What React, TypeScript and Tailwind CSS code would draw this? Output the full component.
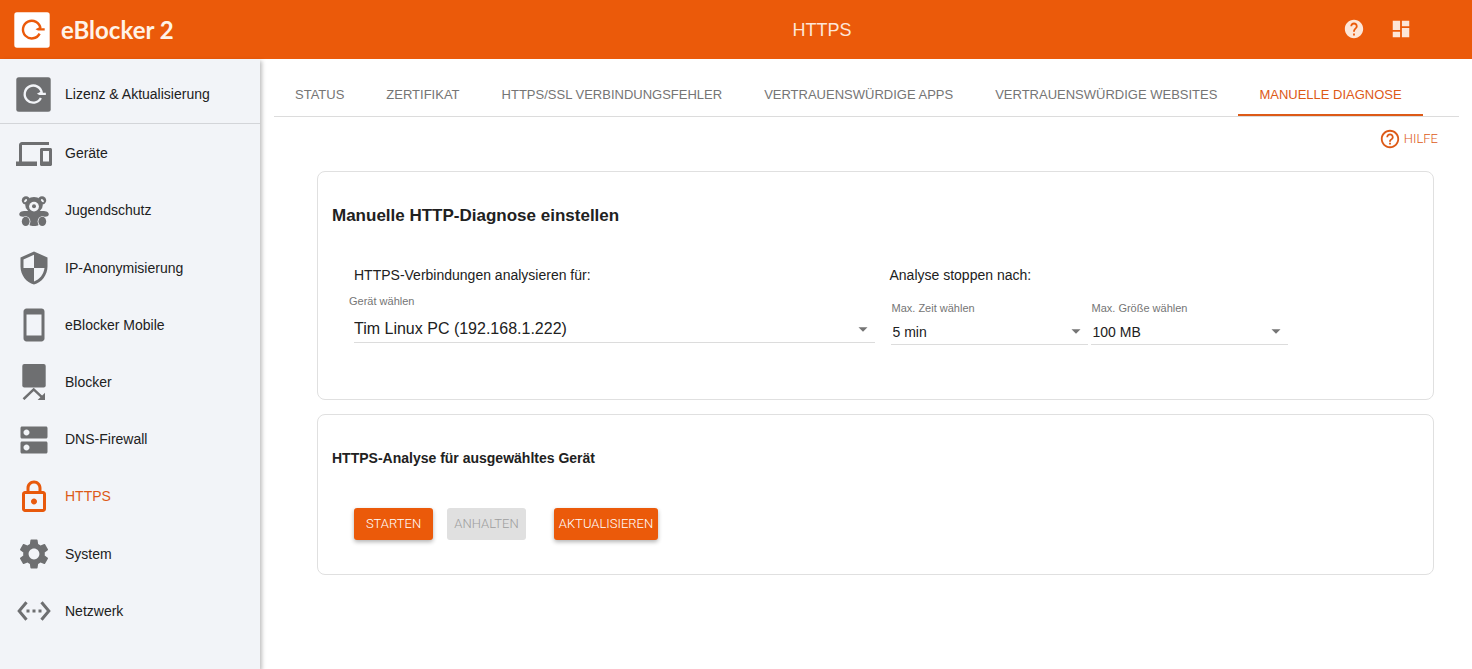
import { useState, type ReactNode } from "react";
import {
  MdDashboard,
  MdDevices,
  MdDns,
  MdHelp,
  MdHelpOutline,
  MdOutlineLock,
  MdSecurity,
  MdSettings,
  MdSettingsEthernet,
  MdStayCurrentPortrait,
} from "react-icons/md";

function LogoMark({ className, ring }: { className: string; ring: string }) {
  return (
    <svg viewBox="0 0 36 36" className={className} aria-hidden="true">
      <rect x="0.3" y="0.3" width="35.4" height="35.4" rx="2.6" fill="currentColor" />
      <path
        d="M26.500 16.600A8.800 8.800 0 1 0 25.600 21.600"
        fill="none"
        stroke={ring}
        strokeWidth="2.400"
      />
      <path d="M21.500 17.200L25.200 15.200L27.200 16.200H30.700V18.600H24z" fill={ring} />
    </svg>
  );
}

function TeddyIcon() {
  return (
    <svg viewBox="0 0 30 30" className="size-[30px]" aria-hidden="true" fill="currentColor">
      <circle cx="7" cy="4.400" r="4.200" />
      <circle cx="23" cy="4.400" r="4.200" />
      <ellipse cx="15" cy="9" rx="8.800" ry="7.900" />
      <path d="M2.500 15.400C6 14.600 9 15 11 15h8c2 0 5-.4 8.500.4 3 1.200 3 4.600 0 5-2 .3-4 .2-5.500.4L19.600 29c-1.500 1.300-7.700 1.300-9.200 0L8 20.800c-1.500-.2-3.500-.1-5.500-.4-3-.4-3-3.800 0-5z" />
      <g fill="#f2f4f8">
        <ellipse cx="6.600" cy="4.600" rx="1.100" ry="1.900" transform="rotate(40 6.600 4.600)" />
        <ellipse cx="23.400" cy="4.600" rx="1.100" ry="1.900" transform="rotate(-40 23.400 4.600)" />
        <circle cx="15" cy="10.600" r="4.900" />
        <ellipse cx="6.700" cy="25.600" rx="4.700" ry="5.300" />
        <ellipse cx="23.300" cy="25.600" rx="4.700" ry="5.300" />
      </g>
      <circle cx="15" cy="10.300" r="2" />
      <ellipse cx="6.700" cy="25.400" rx="3.900" ry="4.600" />
      <ellipse cx="23.300" cy="25.400" rx="3.900" ry="4.600" />
    </svg>
  );
}

function BlockerIcon() {
  return (
    <svg viewBox="0 0 24 36" className="h-9 w-6" aria-hidden="true" fill="currentColor">
      <rect x="0.3" y="0" width="23.400" height="23.400" rx="2" />
      <path d="M1.500 35.200L11.700 25.400l8.500 8" fill="none" stroke="currentColor" strokeWidth="2.500" />
      <path d="M23 28.800v7.200h-7.400z" />
    </svg>
  );
}

type NavItem = { label: string; icon: ReactNode };

const navItems: NavItem[] = [
  { label: "Geräte", icon: <MdDevices className="size-9" /> },
  { label: "Jugendschutz", icon: <TeddyIcon /> },
  { label: "IP-Anonymisierung", icon: <MdSecurity className="size-9" /> },
  { label: "eBlocker Mobile", icon: <MdStayCurrentPortrait className="size-9" /> },
  { label: "Blocker", icon: <BlockerIcon /> },
  { label: "DNS-Firewall", icon: <MdDns className="size-9" /> },
  { label: "HTTPS", icon: <MdOutlineLock className="size-9" /> },
  { label: "System", icon: <MdSettings className="size-9" /> },
  { label: "Netzwerk", icon: <MdSettingsEthernet className="size-9" /> },
];

const tabs = [
  "STATUS",
  "ZERTIFIKAT",
  "HTTPS/SSL VERBINDUNGSFEHLER",
  "VERTRAUENSWÜRDIGE APPS",
  "VERTRAUENSWÜRDIGE WEBSITES",
  "MANUELLE DIAGNOSE",
];

function SelectField({
  id,
  label,
  options,
  large = false,
}: {
  id: string;
  label: string;
  options: string[];
  large?: boolean;
}) {
  return (
    <div className={large ? "flex flex-col" : "flex w-[197px] flex-col"}>
      <label
        htmlFor={id}
        className={
          large
            ? "text-[11px] leading-4 text-[#757575]"
            : "pl-px text-[11px] leading-4 text-[#757575]"
        }
      >
        {label}
      </label>
      <div className={large ? "relative mt-1 ml-[5px]" : "relative mt-1"}>
        <select
          id={id}
          className={
            large
              ? "h-[30px] w-full appearance-none border-b border-[#dcdcdc] bg-transparent pt-0.5 pr-8 text-[16px] outline-none"
              : "h-[25px] w-full appearance-none border-b border-[#dcdcdc] bg-transparent pr-8 pl-0.5 text-[14px] outline-none"
          }
        >
          {options.map((option) => (
            <option key={option}>{option}</option>
          ))}
        </select>
        <svg
          viewBox="0 0 10 5"
          className={
            large
              ? "pointer-events-none absolute right-[7px] bottom-[11px] h-[5px] w-[10px] text-[#757575]"
              : "pointer-events-none absolute right-[7px] bottom-[11px] h-[5px] w-[10px] text-[#757575]"
          }
          aria-hidden="true"
        >
          <path d="M0.500 0.300h9L5 4.700z" fill="currentColor" />
        </svg>
      </div>
    </div>
  );
}

export default function App() {
  const [activeNav, setActiveNav] = useState("HTTPS");
  const [activeTab, setActiveTab] = useState("MANUELLE DIAGNOSE");

  return (
    <div className="flex min-h-screen flex-col bg-white font-['Liberation_Sans',Arial,sans-serif] text-[14px] text-[#212121]">
      <header className="grid h-[59px] grid-cols-[1fr_auto_1fr] items-center bg-[#eb5a0a] text-white">
        <div className="flex items-center gap-[11px] pl-3.5">
          <LogoMark className="size-9 text-white" ring="#eb5a0a" />
          <span className="font-['Lato',sans-serif] text-[24px] font-bold text-[#fff3e8]">
            eBlocker 2
          </span>
        </div>
        <h1 className="pt-0.5 pl-[172px] text-[18px] text-[#fde6d8]">HTTPS</h1>
        <div className="flex items-center justify-end gap-[25px] pr-[60px] pb-0.5 text-[#fde6d8]">
          <button type="button" aria-label="Hilfe">
            <MdHelp className="size-[22px]" />
          </button>
          <button type="button" aria-label="Dashboard">
            <MdDashboard className="size-[22px]" />
          </button>
        </div>
      </header>

      <div className="flex flex-1">
        <aside className="w-[260px] shrink-0 bg-[#f2f4f8] shadow-[2px_2px_4px_rgba(0,0,0,0.25)]">
          <a
            href="#lizenz"
            className="flex h-[65px] items-center gap-3.5 border-b border-[#d3d5d9] pt-1.5 pl-4"
          >
            <LogoMark className="size-[35px] text-[#6e6f71]" ring="#f2f4f8" />
            <span>Lizenz &amp; Aktualisierung</span>
          </a>
          <nav className="grid min-h-[516px] auto-rows-fr pt-px">
            {navItems.map((item) => (
              <a
                key={item.label}
                href={`#${item.label}`}
                onClick={() => setActiveNav(item.label)}
                className={
                  item.label === activeNav
                    ? "flex items-center gap-[13px] pl-4 text-[#dd5a17]"
                    : "flex items-center gap-[13px] pl-4"
                }
              >
                <span
                  className={
                    item.label === activeNav
                      ? "flex w-9 justify-center text-[#e8590c]"
                      : "flex w-9 justify-center text-[#6e6f71]"
                  }
                >
                  {item.icon}
                </span>
                {item.label}
              </a>
            ))}
          </nav>
        </aside>

        <main className="min-w-0 flex-1 pt-3 pr-[13px] pl-3.5">
          <div role="tablist" className="flex border-b border-[#dcdcdc]">
            {tabs.map((tab) => (
              <button
                key={tab}
                type="button"
                role="tab"
                aria-selected={tab === activeTab}
                onClick={() => setActiveTab(tab)}
                className={
                  tab === activeTab
                    ? "h-[45px] border-b-2 border-[#dd5a17] px-[21px] pt-1 text-[13px] whitespace-nowrap text-[#dd5a17]"
                    : "h-[45px] border-b-2 border-transparent px-[21px] pt-1 text-[13px] whitespace-nowrap text-[#757575]"
                }
              >
                {tab}
              </button>
            ))}
          </div>

          <div className="flex justify-end pt-[11px] pr-[21px]">
            <a
              href="#hilfe"
              className="flex items-center gap-[3px] font-['Roboto',sans-serif] text-[13px] font-light text-[#dd5a17]"
            >
              <MdHelpOutline className="size-[22px]" />
              HILFE
            </a>
          </div>

          <div className="mt-[21px] mr-[25px] ml-[43px] flex flex-col gap-3.5">
            <section className="rounded-lg border border-[#e0e0e0] px-3.5 pt-8 pb-[54px]">
              <h2 className="text-[17px] leading-6 font-bold">Manuelle HTTP-Diagnose einstellen</h2>
              <div className="mt-[37px] grid grid-cols-2 gap-[15px] pr-1 pl-[17px]">
                <div>
                  <p className="pl-[5px] leading-5">HTTPS-Verbindungen analysieren für:</p>
                  <div className="mt-2">
                    <SelectField
                      id="device"
                      label="Gerät wählen"
                      options={["Tim Linux PC (192.168.1.222)"]}
                      large
                    />
                  </div>
                </div>
                <div>
                  <p className="leading-5">Analyse stoppen nach:</p>
                  <div className="mt-[15px] flex gap-[3px] pl-px">
                    <SelectField id="time" label="Max. Zeit wählen" options={["5 min"]} />
                    <SelectField id="size" label="Max. Größe wählen" options={["100 MB"]} />
                  </div>
                </div>
              </div>
            </section>

            <section className="rounded-lg border border-[#e0e0e0] px-3.5 pt-[33px] pb-[34px]">
              <h2 className="text-[14px] leading-5 font-bold">HTTPS-Analyse für ausgewähltes Gerät</h2>
              <div className="mt-10 flex pl-[22px] font-['Roboto',sans-serif] text-[13px] font-light">
                <button
                  type="button"
                  className="h-8 w-[79px] rounded-[3px] bg-[#eb5a0a] text-white shadow-[0_2px_4px_rgba(0,0,0,0.3)]"
                >
                  STARTEN
                </button>
                <button
                  type="button"
                  disabled
                  className="ml-3.5 h-8 w-[79px] rounded-[3px] bg-[#e0e0e0] text-[#9e9e9e]"
                >
                  ANHALTEN
                </button>
                <button
                  type="button"
                  className="ml-7 h-8 w-[104px] rounded-[3px] bg-[#eb5a0a] text-white shadow-[0_2px_4px_rgba(0,0,0,0.3)]"
                >
                  AKTUALISIEREN
                </button>
              </div>
            </section>
          </div>
        </main>
      </div>
    </div>
  );
}
